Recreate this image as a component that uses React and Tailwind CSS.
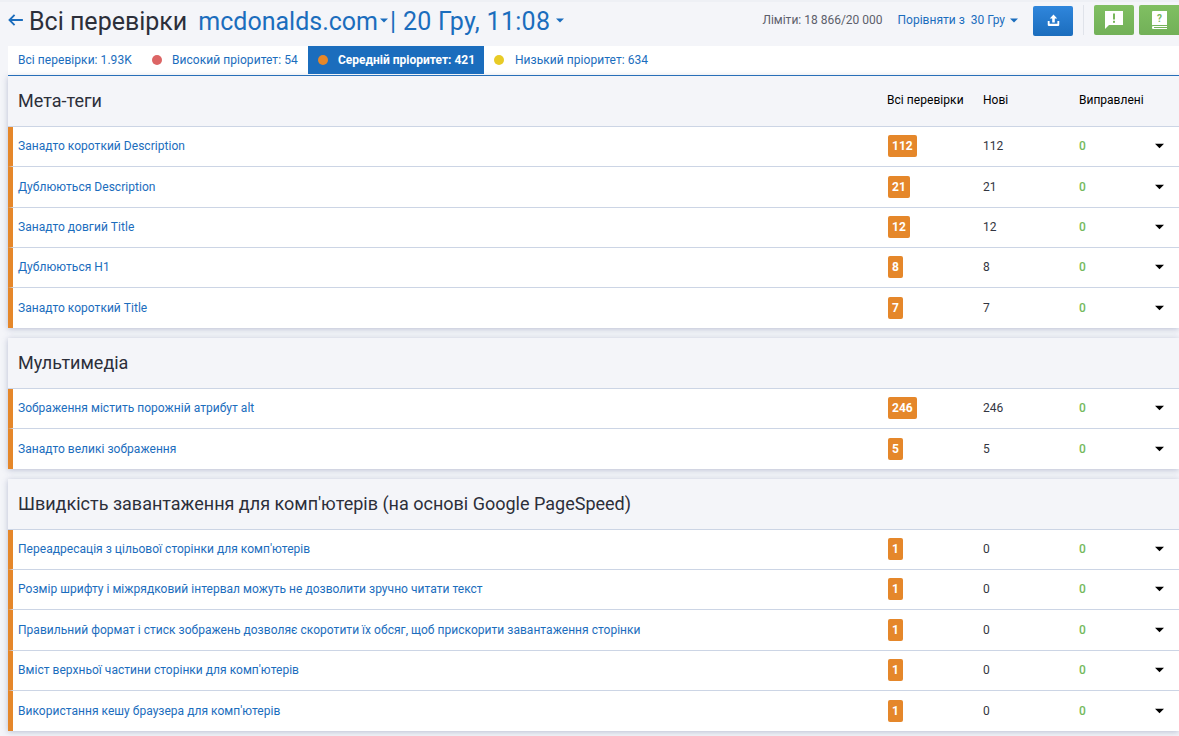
import React from "react";

const Caret = ({ className = "" }) => (
  <svg viewBox="0 0 10 6" className={className} fill="currentColor"><path d="M0 0.5h10L5 5.5z" /></svg>
);

const sections = [
  { title: "Мета-теги", head: true, rows: [
    ["Занадто короткий Description", "112", "112"],
    ["Дублюються Description", "21", "21"],
    ["Занадто довгий Title", "12", "12"],
    ["Дублюються H1", "8", "8"],
    ["Занадто короткий Title", "7", "7"],
  ]},
  { title: "Мультимедіа", rows: [
    ["Зображення містить порожній атрибут alt", "246", "246"],
    ["Занадто великі зображення", "5", "5"],
  ]},
  { title: "Швидкість завантаження для комп'ютерів (на основі Google PageSpeed)", rows: [
    ["Переадресація з цільової сторінки для комп'ютерів", "1", "0"],
    ["Розмір шрифту і міжрядковий інтервал можуть не дозволити зручно читати текст", "1", "0"],
    ["Правильний формат і стиск зображень дозволяє скоротити їх обсяг, щоб прискорити завантаження сторінки", "1", "0"],
    ["Вміст верхньої частини сторінки для комп'ютерів", "1", "0"],
    ["Використання кешу браузера для комп'ютерів", "1", "0"],
  ]},
];

function Row({ row, last }) {
  return (
    <div className={`flex items-center h-[40.3px] pb-[0.6px] bg-white border-l-[5px] border-[#e5872a] pl-[5px] text-[12px] ${last ? "" : "border-b border-b-[#ccd5e5]"}`}>
      <a className="flex-1 text-[#1b6dbd] tracking-[0.03px]">{row[0]}</a>
      <div className="w-[96px] pl-px">
        <span className="inline-block h-[22px] leading-[22px] px-[4px] min-w-[15px] text-center rounded-[2px] bg-[#e5872a] text-white font-bold text-[12px]">{row[1]}</span>
      </div>
      <div className="w-[96px] text-[#333641]">{row[2]}</div>
      <div className="w-[76px] text-[#74b95d] font-medium">0</div>
      <Caret className="w-[9px] h-[6px] text-black mr-[15px]" />
    </div>
  );
}

export default function App() {
  return (
    <div className="w-[1179px] h-[736px] overflow-hidden bg-[#f4f5f9] [font-family:Roboto,sans-serif] pl-2 border-t-2 border-[#eef0f5]">
      <div className="h-[44px] pb-[8px] flex items-center text-[#1b6dbd]">
        <span className="w-[21px] text-[#1b6dbd]">
          <svg viewBox="0 0 16 13" className="w-[15px] h-[12px]" fill="none" stroke="currentColor" strokeWidth="2"><path d="M16 6.5H1.5M7 1L1.5 6.5 7 12" /></svg>
        </span>
        <span className="text-[#2c2f3a] text-[25px] mt-[4px]">Всі перевірки</span>
        <span className="text-[25px] ml-[11px] mt-[4px]">mcdonalds.com</span>
        <Caret className="w-[8px] h-[5px] ml-[2px]" />
        <span className="text-[25px] ml-[2px] mt-[4px] tracking-[0.3px]">| 20 Гру, 11:08</span>
        <Caret className="w-[8px] h-[5px] ml-[6px]" />
        <div className="flex-1" />
        <span className="text-[12px] text-[#5d606b]">Ліміти: 18 866/20 000</span>
        <span className="text-[12px] ml-[15px]">Порівняти з&nbsp; 30 Гру</span>
        <Caret className="w-[8px] h-[5px] ml-[5px]" />
        <button className="w-[40px] h-[30px] ml-[15px] mt-[1px] rounded-[2px] bg-gradient-to-b from-[#2f86dc] to-[#1b6dbd] flex items-center justify-center text-white">
          <svg viewBox="0 0 14 14" className="w-[13px] h-[13px]" fill="currentColor"><path d="M7 0.5l4 4.3H8.4v4.4H5.6V4.8H3z" /><path d="M0.8 7.6h2v3h8.4v-3h2v4.2a1.2 1.2 0 0 1-1.2 1.2H2a1.2 1.2 0 0 1-1.2-1.2z" /></svg>
        </button>
        <div className="w-px h-[30px] bg-[#e0e3ea] ml-[10px]" />
        <button className="w-[40px] h-[30px] ml-[10px] mt-[-1px] rounded-[2px] bg-gradient-to-b from-[#80bf62] to-[#72b058] flex items-center justify-center">
          <svg viewBox="0 0 18 18" className="w-[18px] h-[18px]"><path d="M0 0h18v14H4l-4 4z" fill="#fff" /><rect x="8" y="2.5" width="2" height="6" fill="#78b75b" /><rect x="8" y="9.8" width="2" height="2" fill="#78b75b" /></svg>
        </button>
        <button className="w-[40px] h-[30px] ml-[5px] mt-[-1px] shrink-0 rounded-l-[2px] bg-gradient-to-b from-[#80bf62] to-[#72b058] flex items-center justify-center">
          <svg viewBox="0 0 16 18" className="w-[16px] h-[18px]"><path d="M2 0h14v14H2a2 2 0 0 0-1 .3V1a1 1 0 0 1 1-1z" fill="#fff" /><path d="M1 16a1.4 1.4 0 0 1 1-1h14v1H3v1h13v1H2a1 1 0 0 1-1-1z" fill="#fff" /><text x="8.5" y="10.5" textAnchor="middle" fontSize="10" fontWeight="700" fill="#78b75b" fontFamily="Roboto">?</text></svg>
        </button>
      </div>

      <div className="h-[30px] pb-[1px] bg-white border-b border-[#1b6dbd] flex items-stretch text-[12px] text-[#1b6dbd] tracking-[0.05px]">
        <div className="flex items-center pl-[10px] w-[134px]">Всі перевірки: 1.93K</div>
        <div className="flex items-center w-[166px]">
          <span className="w-[10px] h-[10px] rounded-full bg-[#dc6565] ml-[10px] mr-[10px]" />Високий пріоритет: 54
        </div>
        <div className="flex items-center w-[176px] bg-[#1b6dbd] text-white font-bold tracking-normal">
          <span className="w-[10px] h-[10px] rounded-full bg-[#e5872a] ml-[10px] mr-[10px]" />Середній пріоритет: 421
        </div>
        <div className="flex items-center">
          <span className="w-[10px] h-[10px] rounded-full bg-[#e8cb26] ml-[10px] mr-[11px]" />Низький пріоритет: 634
        </div>
      </div>

      {sections.map((s) => (
        <div key={s.title} className="mb-[10px] shadow-[0_1px_6px_rgba(110,125,165,0.45)]">
          <div className={`${s.head ? "h-[51px]" : "h-[50.3px]"} pb-[2px] flex items-center pl-[10px] bg-[#f4f5f9] border-b border-[#ccd5e5]`}>
            <div className="flex-1 text-[18px] text-[#2c2f3a]">{s.title}</div>
            {s.head && (
              <div className="flex text-[12px] text-black">
                <div className="w-[96px] tracking-[0.05px]">Всі перевірки</div>
                <div className="w-[96px]">Нові</div>
                <div className="w-[100px]">Виправлені</div>
              </div>
            )}
          </div>
          {s.rows.map((r, j) => <Row key={r[0]} row={r} last={j === s.rows.length - 1} />)}
        </div>
      ))}
    </div>
  );
}
